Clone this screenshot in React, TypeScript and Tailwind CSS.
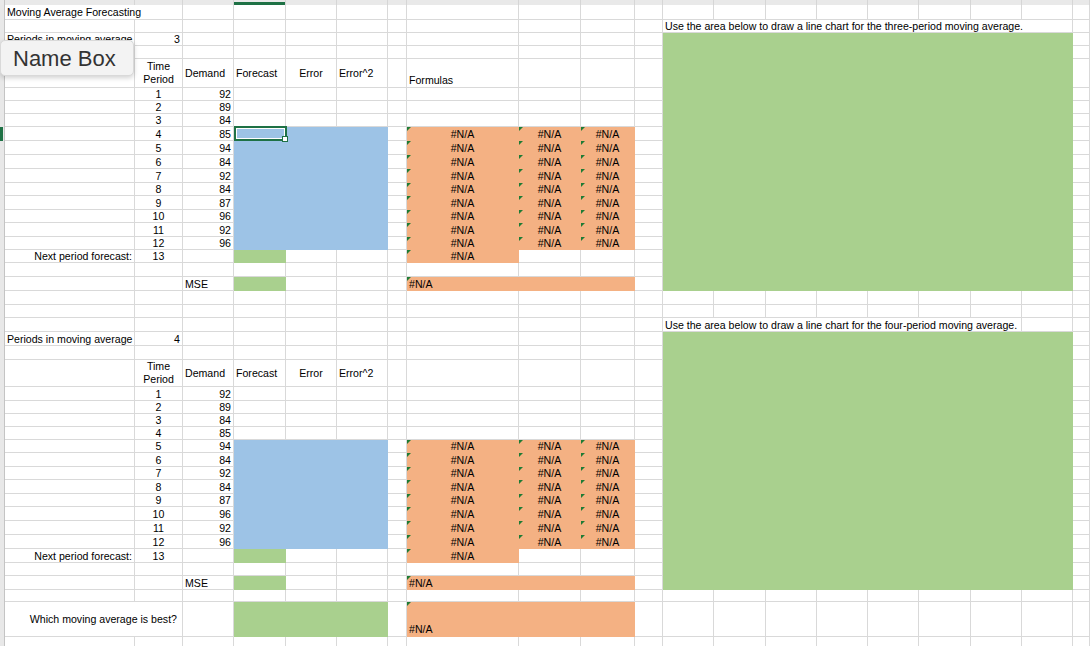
import React from "react";
import clsx from "clsx";

const COLS = ["A", "B", "C", "D", "E", "F", "G", "H", "I", "J", "K", "L", "M", "N", "O", "P", "Q", "R", "S", "T"] as const;
type Col = (typeof COLS)[number];

const WIDTH: Record<Col, string> = {
  A: "w-[130px]",
  B: "w-[48px]",
  C: "w-[51px]",
  D: "w-[52px]",
  E: "w-[51px]",
  F: "w-[51px]",
  G: "w-[19px]",
  H: "w-[112px]",
  I: "w-[62px]",
  J: "w-[54px]",
  K: "w-[28px]",
  L: "w-[51px]",
  M: "w-[52px]",
  N: "w-[51px]",
  O: "w-[51px]",
  P: "w-[51px]",
  Q: "w-[52px]",
  R: "w-[51px]",
  S: "w-[51px]",
  T: "flex-1",
};

const FILL = {
  blue: "bg-[#9dc3e6] border-[#9dc3e6]",
  orange: "bg-[#f4b183] border-[#f4b183]",
  green: "bg-[#a9d08e] border-[#a9d08e]",
};

type Cell = {
  t?: React.ReactNode;
  a?: "l" | "c" | "r";
  v?: "c" | "b";
  f?: keyof typeof FILL;
  tri?: boolean;
  span?: number;
  w?: string;
  sel?: boolean;
};

type Row = { h: string; sel?: boolean; cells: Partial<Record<Col, Cell>> };

const green = { L: { f: "green", span: 8, w: "w-[410px]" } as Cell };
const na = (): Cell => ({ t: "#N/A", a: "c", f: "orange", tri: true });

function header(formulas: boolean): Partial<Record<Col, Cell>> {
  return {
    B: {
      t: (
        <span className="text-center leading-[13px]">
          Time
          <br />
          Period
        </span>
      ),
      a: "c",
    },
    C: { t: "Demand" },
    D: { t: "Forecast" },
    E: { t: "Error", a: "c" },
    F: { t: "Error^2" },
    ...(formulas ? { H: { t: "Formulas", v: "b" } as Cell } : {}),
    ...green,
  };
}

const demand = [92, 89, 84, 85, 94, 84, 92, 84, 87, 96, 92, 96];

function dataRows(heights: string[], fillFrom: number, selected: boolean): Row[] {
  return demand.map((d, i) => {
    const p = i + 1;
    const cells: Partial<Record<Col, Cell>> = {
      B: { t: String(p), a: "c" },
      C: { t: String(d), a: "r" },
      ...green,
    };
    const isSel = selected && p === fillFrom;
    if (p >= fillFrom) {
      if (isSel) {
        cells.D = { f: "blue", sel: true };
        cells.E = { f: "blue", span: 2, w: "w-[102px]" };
      } else {
        cells.D = { f: "blue", span: 3, w: "w-[154px]" };
      }
      cells.H = na();
      cells.I = na();
      cells.J = na();
    }
    return { h: heights[i], sel: isSel, cells };
  });
}

const ROWS: Row[] = [
  { h: "h-[15px]", cells: { A: { t: "Moving Average Forecasting", span: 2, w: "w-[178px]" } } },
  {
    h: "h-[13px]",
    cells: {
      L: { t: "Use the area below to draw a line chart for the three-period moving average.", span: 8, w: "w-[410px]" },
    },
  },
  { h: "h-[13px]", cells: { A: { t: "Periods in moving average" }, B: { t: "3", a: "r" }, ...green } },
  { h: "h-[13px]", cells: { ...green } },
  { h: "h-[29px]", cells: header(true) },
  ...dataRows(
    ["h-[13px]", "h-[13px]", "h-[13px]", "h-[14px]", "h-[14px]", "h-[14px]", "h-[14px]", "h-[13px]", "h-[14px]", "h-[13px]", "h-[14px]", "h-[13px]"],
    4,
    true
  ),
  {
    h: "h-[13px]",
    cells: { A: { t: "Next period forecast:", a: "r" }, B: { t: "13", a: "c" }, D: { f: "green" }, H: na(), ...green },
  },
  { h: "h-[14px]", cells: { ...green } },
  {
    h: "h-[14px]",
    cells: {
      C: { t: "MSE" },
      D: { f: "green" },
      H: { t: "#N/A", f: "orange", tri: true, span: 3, w: "w-[228px]" },
      ...green,
    },
  },
  { h: "h-[14px]", cells: {} },
  { h: "h-[13px]", cells: {} },
  {
    h: "h-[14px]",
    cells: {
      L: { t: "Use the area below to draw a line chart for the four-period moving average.", span: 7, w: "w-[359px]" },
    },
  },
  { h: "h-[14px]", cells: { A: { t: "Periods in moving average" }, B: { t: "4", a: "r" }, ...green } },
  { h: "h-[14px]", cells: { ...green } },
  { h: "h-[27px]", cells: header(false) },
  ...dataRows(
    ["h-[14px]", "h-[13px]", "h-[13px]", "h-[13px]", "h-[13px]", "h-[14px]", "h-[13px]", "h-[14px]", "h-[13px]", "h-[14px]", "h-[14px]", "h-[14px]"],
    5,
    false
  ),
  {
    h: "h-[14px]",
    cells: { A: { t: "Next period forecast:", a: "r" }, B: { t: "13", a: "c" }, D: { f: "green" }, H: na(), ...green },
  },
  { h: "h-[13px]", cells: { ...green } },
  {
    h: "h-[14px]",
    cells: {
      C: { t: "MSE" },
      D: { f: "green" },
      H: { t: "#N/A", f: "orange", tri: true, span: 3, w: "w-[228px]" },
      ...green,
    },
  },
  { h: "h-[12px]", cells: {} },
  {
    h: "h-[35px]",
    cells: {
      A: { t: "Which moving average is best?", a: "r", span: 2, w: "w-[178px] pr-[5px]" },
      D: { f: "green", span: 3, w: "w-[154px]" },
      H: { t: "#N/A", f: "orange", tri: true, v: "b", span: 3, w: "w-[228px]" },
    },
  },
  { h: "h-[13px]", cells: {} },
];

function CellView({ col, c }: { col: Col; c?: Cell }) {
  return (
    <div
      className={clsx(
        "relative flex shrink-0 border-r border-b px-[2px] whitespace-nowrap leading-[12px]",
        c?.sel ? "overflow-visible" : "overflow-hidden",
        c?.w ?? WIDTH[col],
        c?.f ? FILL[c.f] : "border-[#d9d9d9]",
        c?.a === "r" ? "justify-end" : c?.a === "c" ? "justify-center" : "justify-start",
        c?.v === "b" ? "items-end pb-px" : "items-center"
      )}
    >
      {c?.tri && (
        <span className="absolute top-0 left-0 h-0 w-0 border-t-[4px] border-r-[4px] border-t-[#1e7b34] border-r-transparent" />
      )}
      {c?.sel && (
        <>
          <span className="absolute top-[-1px] left-0 z-10 h-[15px] w-[53px] border-2 border-[#1e7145] bg-white p-px">
            <span className="block h-full w-full bg-[#9dc3e6]" />
          </span>
          <span className="absolute top-[9px] left-[48px] z-20 h-[6px] w-[6px] border border-[#1e7145] bg-white" />
        </>
      )}
      {c?.t}
    </div>
  );
}

function SheetRow({ row }: { row: Row }) {
  const cells: React.ReactNode[] = [];
  for (let i = 0; i < COLS.length; i++) {
    const col = COLS[i];
    const c = row.cells[col];
    cells.push(<CellView key={col} col={col} c={c} />);
    if (c?.span) i += c.span - 1;
  }
  return (
    <div className={clsx("flex", row.h)}>
      <div className="flex w-[5px] shrink-0 border-r border-[#c4c4c4] bg-[#e8e8e8]">
        {row.sel && <div className="w-[3px] bg-[#1e7145]" />}
      </div>
      {cells}
    </div>
  );
}

export default function App() {
  return (
    <div className="relative h-[646px] w-[1090px] overflow-hidden bg-white font-['Liberation_Sans',Arial,sans-serif] text-[10.6px] text-black">
      <div className="flex h-[5px] bg-[#e9e9e9]">
        <div className="w-[5px] shrink-0 border-r border-[#c4c4c4]" />
        {COLS.map((col) => (
          <div key={col} className={clsx("flex shrink-0 flex-col justify-end border-r border-[#d6d6d6]", WIDTH[col])}>
            {col === "D" && <div className="h-[3px] bg-[#1e7145]" />}
          </div>
        ))}
      </div>
      {ROWS.map((row, i) => (
        <SheetRow key={i} row={row} />
      ))}

      <div className="absolute top-[40px] left-0 flex h-[36px] w-[134px] items-center rounded-[5px] border border-[#d9d9d9] bg-[#f3f3f3] pl-[12px] text-[22px] text-[#333] shadow-[0_2px_5px_rgba(0,0,0,0.18)]">
        Name Box
      </div>
    </div>
  );
}
